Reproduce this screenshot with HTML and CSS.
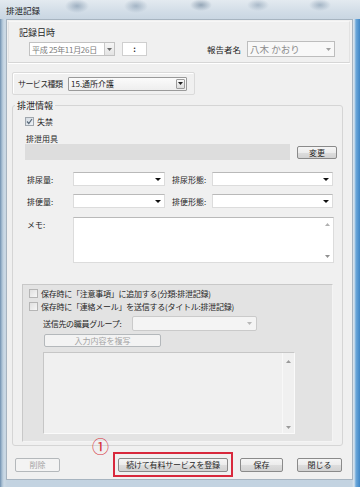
FILE: index.html
```html
<!DOCTYPE html>
<html lang="ja">
<head>
<meta charset="utf-8">
<title>排泄記録</title>
<link rel="stylesheet" href="styles.css">
</head>
<body>
<div class="win">
  <div class="titlebar"><span class="title">排泄記録</span></div>
  <div class="client">
    <div class="rec">
      <div class="rec-label">記録日時</div>
      <div class="rec-row">
        <div class="date"><span class="date-text">平成 25年11月26日</span><span class="date-btn"><svg width="5" height="3" viewBox="0 0 5 3"><path d="M0 0h5L2.5 3z" fill="#6a6a6a"/></svg></span></div>
        <div class="time">:</div>
        <span class="reporter-label">報告者名</span>
        <div class="reporter"><span>八木 かおり</span><svg width="5" height="3" viewBox="0 0 5 3"><path d="M0 0h5L2.5 3z" fill="#a0a0a0"/></svg></div>
      </div>
    </div>

    <div class="svc">
      <span class="svc-label">サービス種類</span>
      <div class="svc-combo"><span>15.通所介護</span><span class="svc-btn"><svg width="5" height="3" viewBox="0 0 5 3"><path d="M0 0h5L2.5 3z" fill="#222"/></svg></span></div>
    </div>

    <fieldset class="grp">
      <legend>排泄情報</legend>
      <div class="cb-row"><span class="cb checked"><svg width="7" height="7" viewBox="0 0 7 7"><path d="M1 3.5l1.8 2L6 1" fill="none" stroke="#5a6a7a" stroke-width="1.2"/></svg></span><span class="cb-text">失禁</span></div>
      <div class="sub-label">排泄用具</div>
      <div class="tool-row">
        <div class="tool-bar"></div>
        <button class="btn change">変更</button>
      </div>
      <div class="sel-row first">
        <span class="f-label">排尿量:</span>
        <div class="sel w1"><svg width="6" height="3" viewBox="0 0 6 3"><path d="M0 0h6L3 3z" fill="#111"/></svg></div>
        <span class="f-label2">排尿形態:</span>
        <div class="sel w2"><svg width="6" height="3" viewBox="0 0 6 3"><path d="M0 0h6L3 3z" fill="#111"/></svg></div>
      </div>
      <div class="sel-row">
        <span class="f-label">排便量:</span>
        <div class="sel w1"><svg width="6" height="3" viewBox="0 0 6 3"><path d="M0 0h6L3 3z" fill="#111"/></svg></div>
        <span class="f-label2">排便形態:</span>
        <div class="sel w2"><svg width="6" height="3" viewBox="0 0 6 3"><path d="M0 0h6L3 3z" fill="#111"/></svg></div>
      </div>
      <div class="memo-row">
        <span class="f-label memo-label">メモ:</span>
        <div class="memo">
          <div class="memo-scroll">
            <svg width="5" height="3" viewBox="0 0 5 3"><path d="M0 3h5L2.5 0z" fill="#b0b0b0"/></svg>
            <svg width="5" height="3" viewBox="0 0 5 3"><path d="M0 0h5L2.5 3z" fill="#909090"/></svg>
          </div>
        </div>
      </div>

      <div class="panel">
        <div class="cb-line first"><span class="cb"></span><span class="cb-text">保存時に「注意事項」に追加する(分類:排泄記録)</span></div>
        <div class="cb-line"><span class="cb"></span><span class="cb-text">保存時に「連絡メール」を送信する(タイトル:排泄記録)</span></div>
        <div class="dest-row">
          <span class="dest-label">送信先の職員グループ:</span>
          <div class="dest"><svg width="5" height="3" viewBox="0 0 5 3"><path d="M0 0h5L2.5 3z" fill="#b8b8b8"/></svg></div>
        </div>
        <button class="btn disabled copy">入力内容を複写</button>
        <div class="mail-box">
          <div class="mail-scroll">
            <svg width="5" height="3" viewBox="0 0 5 3"><path d="M0 3h5L2.5 0z" fill="#9a9a9a"/></svg>
            <svg width="5" height="3" viewBox="0 0 5 3"><path d="M0 0h5L2.5 3z" fill="#9a9a9a"/></svg>
          </div>
        </div>
      </div>
    </fieldset>

    <div class="footer">
      <button class="btn disabled del">削除</button>
      <div class="highlight"><button class="btn cont">続けて有料サービスを登録</button></div>
      <button class="btn save">保存</button>
      <button class="btn close">閉じる</button>
    </div>
  </div>
  <span class="marker">①</span>
</div>
</body>
</html>
```

FILE: styles.css
```css
* { box-sizing: border-box; }
html, body { margin: 0; padding: 0; }
body {
  width: 360px;
  height: 487px;
  overflow: hidden;
  font-family: "Noto Sans CJK JP", "Noto Sans", sans-serif;
  font-size: 8px;
  color: #1f1f1f;
  white-space: nowrap;
  background: #b7cadb;
}
.win {
  position: relative;
  width: 360px;
  height: 487px;
  display: flex;
  flex-direction: column;
  background:
    linear-gradient(90deg, #6f8fae 0, #a9c0d4 2px, #cbd9e5 4px, rgba(203,217,229,0) 7px),
    linear-gradient(270deg, #3f86c6 0, #6aa7da 4px, #d9e5ee 6px, rgba(217,229,238,0) 8px),
    linear-gradient(180deg, #d6e1ea 0, #c9d7e3 20px, #c3d3e1 100%);
}
.titlebar {
  height: 19px;
  padding: 1px 0 0 6px;
  line-height: 18px;
  background:
    radial-gradient(ellipse 12px 7px at 77px 6px, rgba(110,135,160,0.55), rgba(110,135,160,0) 100%),
    radial-gradient(ellipse 12px 7px at 136px 6px, rgba(110,135,160,0.5), rgba(110,135,160,0) 100%),
    radial-gradient(ellipse 11px 6px at 201px 5px, rgba(90,115,140,0.55), rgba(90,115,140,0) 100%),
    radial-gradient(ellipse 11px 6px at 258px 5px, rgba(110,135,160,0.45), rgba(110,135,160,0) 100%),
    radial-gradient(ellipse 11px 6px at 320px 5px, rgba(110,135,160,0.5), rgba(110,135,160,0) 100%),
    linear-gradient(180deg, #e3eaf0 0, #d2dde7 60%, #c9d6e2 100%);
}
.title { font-size: 8.5px; color: #1a1a1a; }

.client {
  height: 461px;
  margin: 0 7px 0 6px;
  background: #f0f0f0;
  border: 1px solid #a7b4c0;
}

/* 記録日時 */
.rec {
  height: 42px;
  margin: 1px 2px 0 1px;
  padding: 5px 0 0 10px;
  border: 1px solid #e2e2e2;
  border-top-color: #f7f7f7;
  border-bottom: 1px solid #d6d6d6;
  box-shadow: 0 1px 0 #ffffff;
}
.rec-label { line-height: 11px; font-size: 9px; }
.rec-row { display: flex; align-items: center; height: 14px; margin-top: 4px; }
.date {
  display: flex; align-items: center; justify-content: space-between;
  margin-left: 10px; width: 86px; height: 14px;
  background: #fff; border: 1px solid #c2c2c2;
  padding-left: 2px; color: #7d7d7d; letter-spacing: -0.3px;
}
.date-btn {
  display: flex; align-items: center; justify-content: center;
  width: 10px; height: 12px; border-left: 1px solid #c9c9c9;
  background: linear-gradient(#f6f6f6, #e4e4e4);
}
.time {
  margin-left: 7px; width: 25px; height: 14px; background: #fff;
  border: 1px solid #cfcfcf; text-align: center; line-height: 12px; font-weight: bold;
}
.reporter-label { margin-left: auto; margin-right: 6px; font-size: 8.5px; }
.reporter {
  display: flex; align-items: center; justify-content: space-between;
  width: 88px; height: 16px; margin-right: 14px; padding: 0 3px 0 2px;
  background: #f8f8f8; border: 1px solid #bdbdbd; color: #8c8c8c; font-size: 9.5px;
}

/* サービス種類 */
.svc {
  display: flex; align-items: center;
  width: 183px; height: 23px; margin: 9px 0 0 5px; padding-left: 5px;
  border: 1px solid #dadada; border-radius: 2px; box-shadow: inset 1px 1px 0 #fff;
}
.svc-label { width: 50px; letter-spacing: -0.6px; }
.svc-combo {
  display: flex; align-items: center; justify-content: space-between;
  width: 119px; height: 14px; padding-left: 2px;
  background: linear-gradient(#fbfbfb, #eeeeee);
  border: 1px solid #9a9a9a; border-radius: 1px;
}
.svc-btn {
  display: flex; align-items: center; justify-content: center;
  width: 9px; height: 10px; margin-right: 1px;
  border: 1px solid #9c9c9c; border-radius: 1px; background: linear-gradient(#fafafa, #dcdcdc);
}

/* 排泄情報 */
.grp {
  width: 331px; margin: 5px 0 0 5px; padding: 0 0 3px 2px;
  border: 1px solid #d5d5d5; border-radius: 3px; min-width: 0;
}
.grp legend { padding: 0 2px; line-height: 11px; font-size: 9px; }
.cb-row { display: flex; align-items: center; height: 11px; margin: 5px 0 0 10px; }
.cb {
  display: inline-flex; align-items: center; justify-content: center;
  width: 9px; height: 9px; border: 1px solid #9fa6ad;
  background: linear-gradient(135deg, #dcdfe3, #f7f8f9);
}
.cb.checked { background: linear-gradient(135deg, #d4dbe3, #eef2f6); }
.cb-text { margin-left: 3px; }
.sub-label { margin: 6px 0 0 11px; line-height: 11px; }
.tool-row { display: flex; align-items: center; height: 16px; margin-left: 10px; }
.tool-bar { width: 265px; height: 16px; background: #dddddd; }

.btn {
  font-family: inherit; font-size: 8px; color: #1f1f1f;
  height: 14px; padding: 0; line-height: 12px; white-space: nowrap;
  border: 1px solid #8a8a8a; border-radius: 2px;
  background: linear-gradient(#f5f5f5 0, #ececec 50%, #dddddd 51%, #d2d2d2 100%);
}
.btn.disabled { color: #a3a3a3; border-color: #b4b8bb; background: #f3f3f3; }
.change { width: 40px; height: 13px; margin-left: 7px; }

.sel-row { display: flex; align-items: center; height: 14px; margin: 8px 0 0 12px; }
.sel-row.first { margin-top: 12px; }
.f-label { width: 46px; }
.f-label2 { width: 40px; margin-left: 7px; }
.sel {
  display: flex; align-items: center; justify-content: flex-end;
  height: 14px; padding-right: 3px; background: #fff;
  border: 1px solid #dcdcdc; border-top-color: #b9b9b9;
}
.sel.w1 { width: 92px; }
.sel.w2 { width: 121px; }

.memo-row { display: flex; align-items: flex-start; height: 46px; margin: 9px 0 0 12px; }
.memo-label { padding-top: 2px; }
.memo {
  display: flex; justify-content: flex-end;
  width: 261px; height: 46px; background: #fff;
  border: 1px solid #dcdcdc; border-top-color: #b9b9b9;
}
.memo-scroll {
  display: flex; flex-direction: column; align-items: center; justify-content: space-between;
  width: 11px; padding: 5px 0 4px;
}

.panel {
  width: 311px; height: 158px; margin: 21px 0 0 7px;
  background: #e3e3e3; border: 1px solid #c8c8c8; border-right-color: #f4f4f4; border-bottom-color: #f4f4f4;
  padding-top: 3px;
}
.cb-line { display: flex; align-items: center; height: 11px; margin: 2px 0 0 6px; letter-spacing: -0.25px; }
.cb-line.first { margin-top: 0; }
.cb-line .cb { background: linear-gradient(135deg, #e0e0e0, #f6f6f6); border-color: #b5b5b5; }
.dest-row { display: flex; align-items: center; height: 15px; margin: 4px 0 0 20px; }
.dest-label { width: 89px; letter-spacing: -0.3px; }
.dest {
  display: flex; align-items: center; justify-content: flex-end;
  width: 125px; height: 15px; padding-right: 4px;
  background: #f4f4f4; border: 1px solid #cacaca; border-radius: 2px;
}
.copy { display: block; width: 117px; height: 13px; margin: 3px 0 0 21px; }
.mail-box {
  display: flex; justify-content: flex-end;
  width: 252px; height: 82px; margin: 5px 0 0 20px;
  background: #f0f0f0; border: 1px solid #c6c6c6; border-right-color: #fafafa; border-bottom-color: #fafafa;
}
.mail-scroll {
  display: flex; flex-direction: column; align-items: center; justify-content: space-between;
  width: 12px; padding: 7px 0 4px; border-left: 1px solid #f8f8f8;
}

.footer { display: flex; align-items: center; height: 25px; margin-top: 6px; }
.del { width: 45px; margin-left: 8px; }
.highlight {
  display: flex; align-items: center; justify-content: center;
  width: 120px; height: 25px; margin-left: 53px;
  border: 2px solid #d8283c;
}
.cont { width: 110px; letter-spacing: -0.2px; }
.save { width: 43px; margin-left: 7px; }
.close { width: 45px; margin-left: 14px; }

.marker {
  position: absolute; left: 92px; top: 436px;
  font-size: 17px; line-height: 19px; color: #d6303c;
}
```
